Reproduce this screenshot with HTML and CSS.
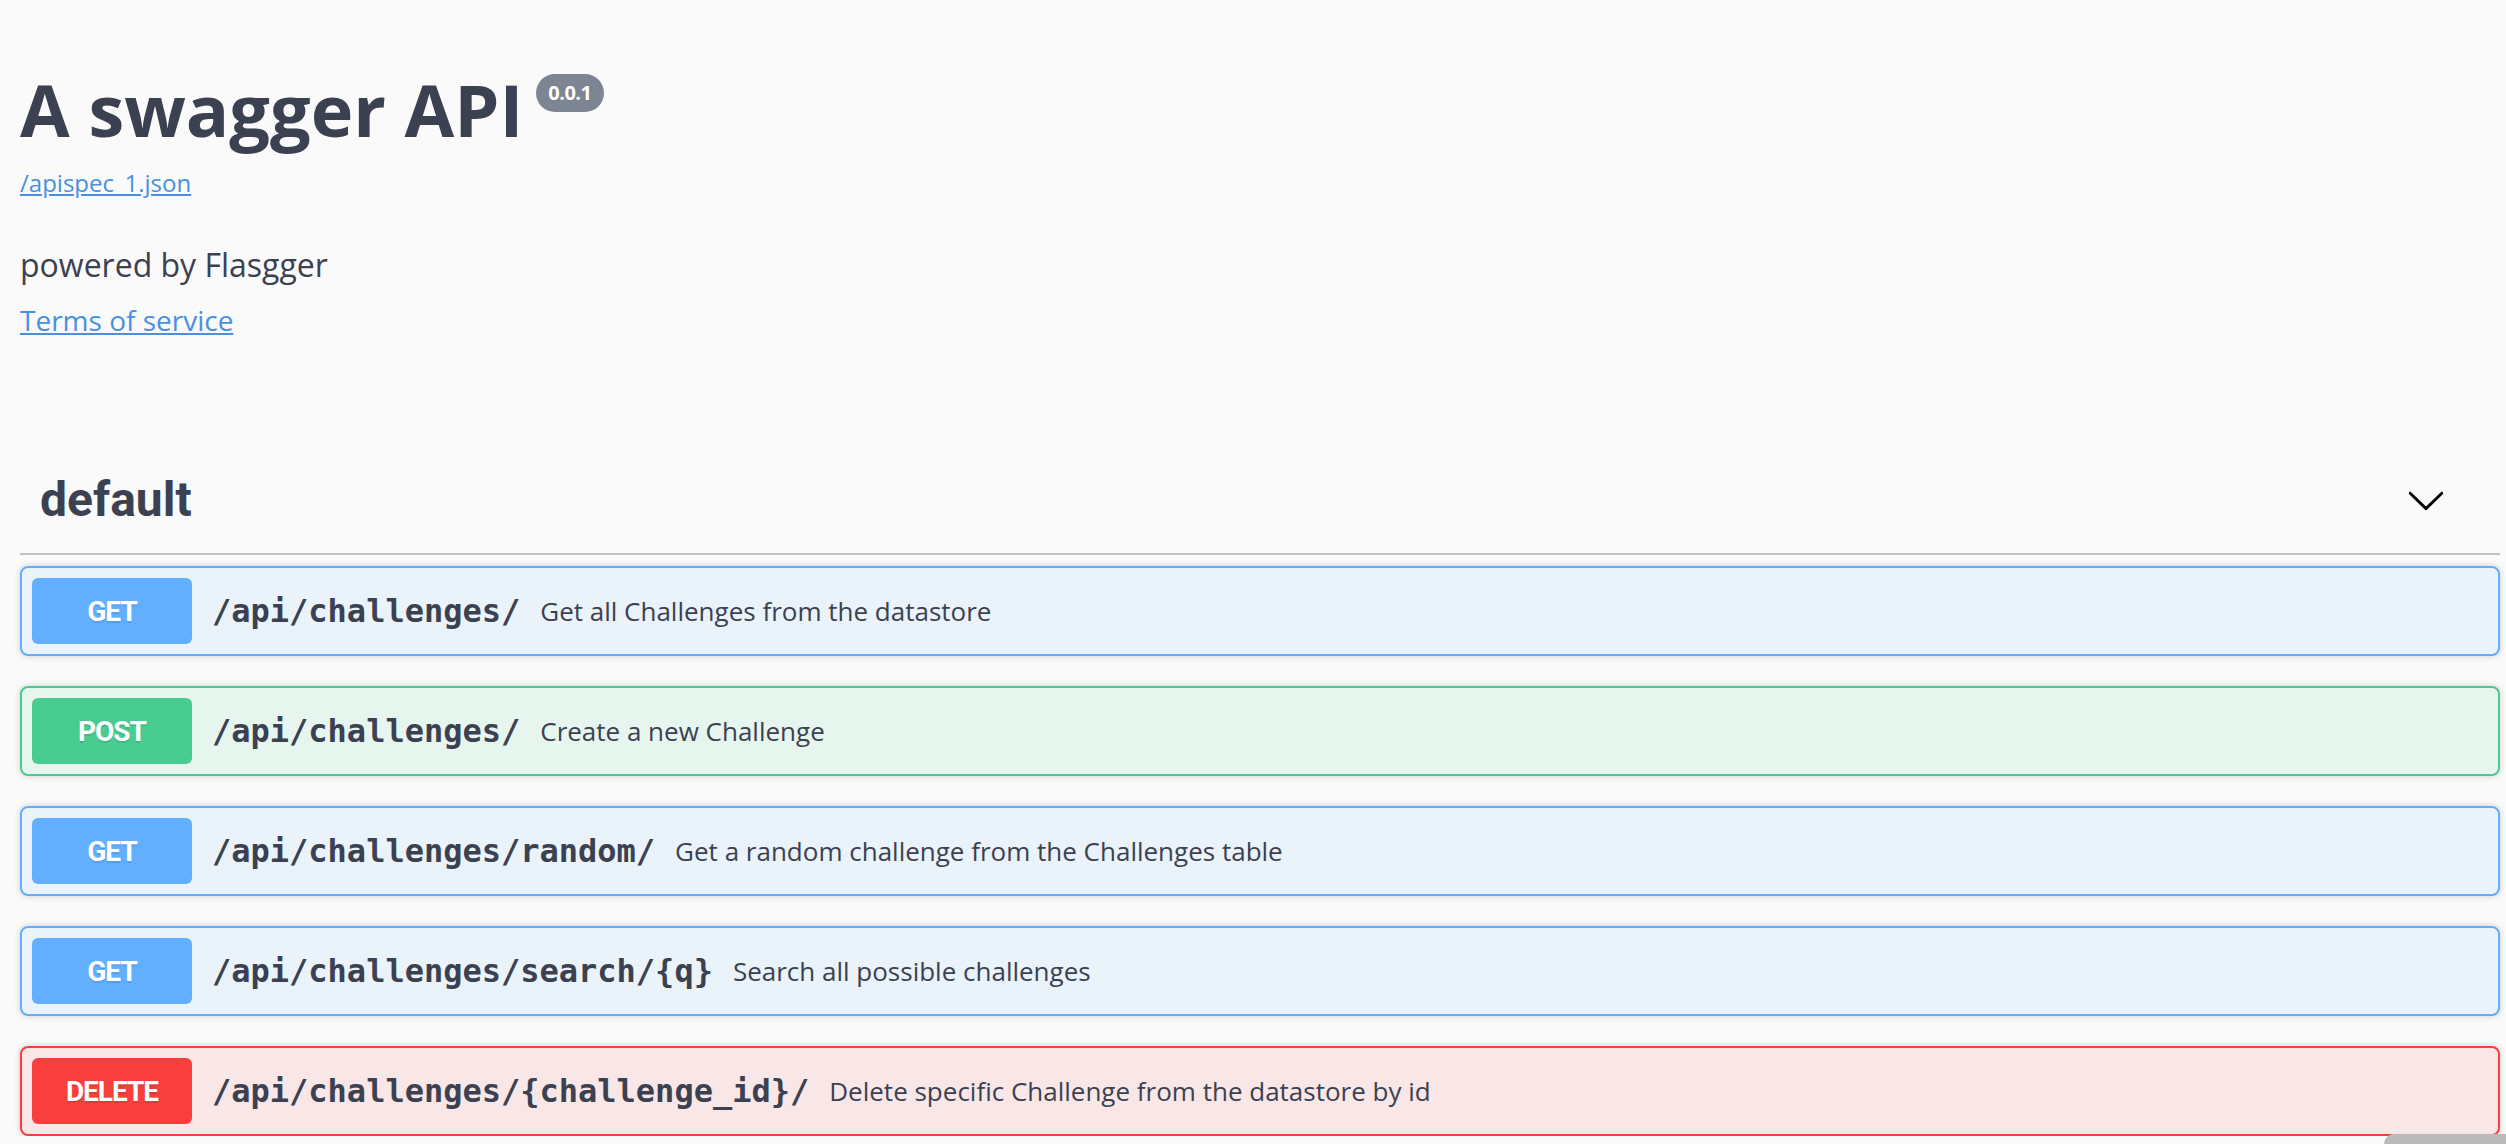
FILE: index.html
```html
<!DOCTYPE html>
<html lang="en">
<head>
<meta charset="utf-8">
<title>A swagger API</title>
<link rel="stylesheet" href="styles.css">
</head>
<body>
<div class="wrapper">
  <section class="info">
    <h1 class="title">A swagger API <span class="version">0.0.1</span></h1>
    <a class="base-url" href="#">/apispec_1.json</a>
    <p class="description">powered by Flasgger</p>
    <a class="terms" href="#">Terms of service</a>
  </section>

  <section class="tag-section">
    <div class="tag-header">
      <h2 class="tag-name">default</h2>
      <svg class="chevron" width="40" height="40" viewBox="0 0 20 20" aria-hidden="true">
        <path d="M17.418 6.109c.272-.268.709-.268.979 0s.271.701 0 .969l-7.908 7.83c-.27.268-.707.268-.979 0l-7.908-7.83c-.27-.268-.27-.701 0-.969.271-.268.709-.268.979 0L10 13.25l7.418-7.141z"/>
      </svg>
    </div>

    <div class="ops">
      <div class="op op-get">
        <span class="method">GET</span>
        <span class="path">/api/challenges/</span>
        <span class="summary">Get all Challenges from the datastore</span>
      </div>
      <div class="op op-post">
        <span class="method">POST</span>
        <span class="path">/api/challenges/</span>
        <span class="summary">Create a new Challenge</span>
      </div>
      <div class="op op-get">
        <span class="method">GET</span>
        <span class="path">/api/challenges/random/</span>
        <span class="summary">Get a random challenge from the Challenges table</span>
      </div>
      <div class="op op-get">
        <span class="method">GET</span>
        <span class="path">/api/challenges/search/{q}</span>
        <span class="summary">Search all possible challenges</span>
      </div>
      <div class="op op-delete">
        <span class="method">DELETE</span>
        <span class="path">/api/challenges/{challenge_id}/</span>
        <span class="summary">Delete specific Challenge from the datastore by id</span>
      </div>
    </div>
  </section>
</div>
<div class="scroll-thumb"></div>
</body>
</html>
```

FILE: styles.css
```css
html, body {
  margin: 0;
  background: #fafafa;
}

body {
  font-family: "Open Sans", "DejaVu Sans", sans-serif;
  color: #3b4151;
}

.wrapper {
  padding: 0 6px 0 20px;
}

.info {
  padding-top: 60px;
  display: flex;
  flex-direction: column;
  align-items: flex-start;
}

.title {
  margin: 0;
  display: flex;
  align-items: flex-start;
  gap: 13px;
  font-family: "Open Sans", sans-serif;
  font-weight: 700;
  font-size: 72px;
  line-height: 98px;
  color: #3b4151;
}

.version {
  margin-top: 14px;
  height: 38px;
  padding: 0 12px;
  border-radius: 19px;
  background: #7d8492;
  color: #fff;
  font-size: 20px;
  line-height: 38px;
  font-weight: 700;
  letter-spacing: -0.5px;
}

.base-url {
  margin-top: 8px;
  font-size: 24px;
  line-height: 33px;
  color: #4990e2;
}

.description {
  margin: 44px 0 0;
  font-size: 32px;
  line-height: 44px;
  color: #3b4151;
}

.terms {
  margin-top: 14px;
  font-size: 28px;
  line-height: 38px;
  color: #4990e2;
}

.tag-section {
  margin-top: 104px;
}

.tag-header {
  display: flex;
  align-items: center;
  justify-content: space-between;
  padding: 22px 54px 18px 20px;
  border-bottom: 2px solid rgba(59, 65, 81, 0.3);
}

.tag-name {
  margin: 0;
  font-family: Roboto, "Open Sans", sans-serif;
  font-weight: 700;
  font-size: 48px;
  line-height: 70px;
  color: #3b4151;
}

.chevron {
  display: block;
  fill: #000;
}

.ops {
  padding-top: 11px;
  display: flex;
  flex-direction: column;
  gap: 30px;
}

.op {
  display: flex;
  align-items: center;
  padding: 10px;
  border: 2px solid;
  border-radius: 8px;
  box-shadow: 0 0 6px rgba(0, 0, 0, 0.19);
}

.op-get {
  border-color: #61affe;
  background: rgba(97, 175, 254, 0.1);
}
.op-get .method { background: #61affe; }

.op-post {
  border-color: #49cc90;
  background: rgba(73, 204, 144, 0.1);
}
.op-post .method { background: #49cc90; }

.op-delete {
  border-color: #f93e3e;
  background: rgba(249, 62, 62, 0.1);
}
.op-delete .method { background: #f93e3e; }

.method {
  flex: none;
  width: 160px;
  height: 66px;
  border-radius: 6px;
  display: flex;
  align-items: center;
  justify-content: center;
  font-family: Roboto, "Open Sans", sans-serif;
  font-weight: 700;
  font-size: 28px;
  letter-spacing: -1px;
  color: #fff;
  text-shadow: 0 2px 0 rgba(0, 0, 0, 0.1);
}

.path {
  padding: 0 20px;
  font-family: "DejaVu Sans Mono", "Liberation Mono", monospace;
  font-weight: 700;
  font-size: 32px;
  color: #3b4151;
}

.summary {
  font-family: "Open Sans", sans-serif;
  font-size: 26px;
  color: #3b4151;
}

.scroll-thumb {
  position: fixed;
  right: 0;
  bottom: 0;
  width: 122px;
  height: 10px;
  border-top-left-radius: 14px;
  background: #bababa;
}
```
